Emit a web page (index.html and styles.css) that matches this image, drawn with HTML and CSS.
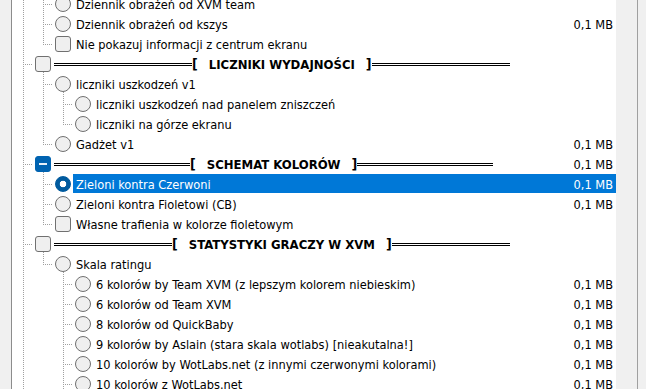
FILE: index.html
```html
<!DOCTYPE html>
<html lang="pl">
<head>
  <meta charset="UTF-8" />
  <title>Opcje XVM</title>
  <link rel="stylesheet" href="styles.css">
</head>
<body>
  <div class="gutter"></div>

  <div class="tree">
    <div class="list">
      <div class="row">
        <span class="g pipe"></span><span class="g tee"></span>
        <span class="ctl"><span class="radio"></span></span>
        <div class="item"><span class="label">Dziennik obrażeń od XVM team</span></div>
      </div>
      <div class="row">
        <span class="g pipe"></span><span class="g tee"></span>
        <span class="ctl"><span class="radio"></span></span>
        <div class="item"><span class="label">Dziennik obrażeń od kszys</span><span class="size">0,1 MB</span></div>
      </div>
      <div class="row">
        <span class="g pipe"></span><span class="g ell"></span>
        <span class="ctl"><span class="box"></span></span>
        <div class="item"><span class="label">Nie pokazuj informacji z centrum ekranu</span></div>
      </div>

      <!-- LICZNIKI -->
      <div class="row hdr hdr-liczniki">
        <span class="g tee"></span>
        <span class="ctl parent"><span class="box"></span></span>
        <div class="item">
          <span class="rule"></span><span class="br">[</span><span class="title">LICZNIKI WYDAJNOŚCI</span><span class="br">]</span><span class="rule"></span>
        </div>
      </div>
      <div class="row">
        <span class="g pipe"></span><span class="g tee"></span>
        <span class="ctl parent"><span class="radio"></span></span>
        <div class="item"><span class="label">liczniki uszkodzeń v1</span></div>
      </div>
      <div class="row">
        <span class="g pipe"></span><span class="g pipe"></span><span class="g tee"></span>
        <span class="ctl"><span class="radio"></span></span>
        <div class="item"><span class="label">liczniki uszkodzeń nad panelem zniszczeń</span></div>
      </div>
      <div class="row">
        <span class="g pipe"></span><span class="g pipe"></span><span class="g ell"></span>
        <span class="ctl"><span class="radio"></span></span>
        <div class="item"><span class="label">liczniki na górze ekranu</span></div>
      </div>
      <div class="row">
        <span class="g pipe"></span><span class="g ell"></span>
        <span class="ctl"><span class="radio"></span></span>
        <div class="item"><span class="label">Gadżet v1</span><span class="size">0,1 MB</span></div>
      </div>

      <!-- SCHEMAT KOLORÓW -->
      <div class="row hdr hdr-schemat">
        <span class="g tee"></span>
        <span class="ctl parent"><span class="box mixed"></span></span>
        <div class="item">
          <span class="rule"></span><span class="br">[</span><span class="title">SCHEMAT KOLORÓW</span><span class="br">]</span><span class="rule"></span>
          <span class="size">0,1 MB</span>
        </div>
      </div>
      <div class="row sel">
        <span class="g pipe"></span><span class="g tee"></span>
        <span class="ctl"><span class="radio on"></span></span>
        <div class="item"><span class="label">Zieloni kontra Czerwoni</span><span class="size">0,1 MB</span></div>
      </div>
      <div class="row">
        <span class="g pipe"></span><span class="g tee"></span>
        <span class="ctl"><span class="radio"></span></span>
        <div class="item"><span class="label">Zieloni kontra Fioletowi (CB)</span><span class="size">0,1 MB</span></div>
      </div>
      <div class="row">
        <span class="g pipe"></span><span class="g ell"></span>
        <span class="ctl"><span class="box"></span></span>
        <div class="item"><span class="label">Własne trafienia w kolorze fioletowym</span></div>
      </div>

      <!-- STATYSTYKI -->
      <div class="row hdr hdr-staty">
        <span class="g tee"></span>
        <span class="ctl parent"><span class="box"></span></span>
        <div class="item">
          <span class="rule"></span><span class="br">[</span><span class="title">STATYSTYKI GRACZY W XVM</span><span class="br">]</span><span class="rule"></span>
        </div>
      </div>
      <div class="row">
        <span class="g pipe"></span><span class="g ell"></span>
        <span class="ctl parent"><span class="radio"></span></span>
        <div class="item"><span class="label">Skala ratingu</span></div>
      </div>
      <div class="row">
        <span class="g pipe"></span><span class="g"></span><span class="g tee"></span>
        <span class="ctl"><span class="radio"></span></span>
        <div class="item"><span class="label">6 kolorów by Team XVM (z lepszym kolorem niebieskim)</span><span class="size">0,1 MB</span></div>
      </div>
      <div class="row">
        <span class="g pipe"></span><span class="g"></span><span class="g tee"></span>
        <span class="ctl"><span class="radio"></span></span>
        <div class="item"><span class="label">6 kolorów od Team XVM</span><span class="size">0,1 MB</span></div>
      </div>
      <div class="row">
        <span class="g pipe"></span><span class="g"></span><span class="g tee"></span>
        <span class="ctl"><span class="radio"></span></span>
        <div class="item"><span class="label">8 kolorów od QuickBaby</span><span class="size">0,1 MB</span></div>
      </div>
      <div class="row">
        <span class="g pipe"></span><span class="g"></span><span class="g tee"></span>
        <span class="ctl"><span class="radio"></span></span>
        <div class="item"><span class="label">9 kolorów by Aslain (stara skala wotlabs) [nieakutalna!]</span><span class="size">0,1 MB</span></div>
      </div>
      <div class="row">
        <span class="g pipe"></span><span class="g"></span><span class="g tee"></span>
        <span class="ctl"><span class="radio"></span></span>
        <div class="item"><span class="label">10 kolorów by WotLabs.net (z innymi czerwonymi kolorami)</span><span class="size">0,1 MB</span></div>
      </div>
      <div class="row">
        <span class="g pipe"></span><span class="g"></span><span class="g tee"></span>
        <span class="ctl"><span class="radio"></span></span>
        <div class="item"><span class="label">10 kolorów z WotLabs.net</span><span class="size">0,1 MB</span></div>
      </div>
    </div>
  </div>

  <div class="track"></div>
  <div class="divider"></div>
</body>
</html>
```

FILE: styles.css
```css
* {
  box-sizing: border-box;
}

html, body {
  margin: 0;
  height: 100%;
}

body {
  display: flex;
  background: #f0f0f0;
  font-family: "DejaVu Sans Condensed", "DejaVu Sans", sans-serif;
  font-size: 12.7px;
  color: #000;
  overflow: hidden;
}

.gutter {
  width: 11px;
  flex: none;
}

.tree {
  width: 605px;
  flex: none;
  background: #fff;
  border-left: 1px solid #8c8c8c;
  overflow: hidden;
}

.track {
  width: 21px;
  flex: none;
}

.divider {
  width: 1px;
  flex: none;
  background: #a0a0a0;
}

.list {
  margin-top: -6px;
}

.row {
  display: flex;
  height: 20px;
}

/* tree guide lines */
.g {
  width: 20px;
  height: 20px;
  flex: none;
}

.pipe {
  background: repeating-linear-gradient(#a0a0a0 0 1px, transparent 1px 2px) 11px 0 / 1px 20px no-repeat;
}

.tee {
  background:
    repeating-linear-gradient(#a0a0a0 0 1px, transparent 1px 2px) 11px 0 / 1px 20px no-repeat,
    repeating-linear-gradient(to right, #a0a0a0 0 1px, transparent 1px 2px) 13px 10px / 8px 1px no-repeat;
}

.ell {
  background:
    repeating-linear-gradient(#a0a0a0 0 1px, transparent 1px 2px) 11px 0 / 1px 11px no-repeat,
    repeating-linear-gradient(to right, #a0a0a0 0 1px, transparent 1px 2px) 13px 10px / 8px 1px no-repeat;
}

/* checkbox / radio cell */
.ctl {
  width: 20px;
  height: 20px;
  flex: none;
  display: flex;
  align-items: center;
  padding-left: 3px;
}

.ctl.parent {
  background: repeating-linear-gradient(#a0a0a0 0 1px, transparent 1px 2px) 11px 18px / 1px 2px no-repeat;
}

.box,
.radio {
  width: 16px;
  height: 16px;
  border: 1px solid #707070;
  background: #efefef;
}

.box {
  border-radius: 3px;
}

.radio {
  border-radius: 50%;
}

.box.mixed {
  border-color: #0063b1;
  background: linear-gradient(#e6f0f9, #e6f0f9) center / 8px 2px no-repeat, #0063b1;
}

.radio.on {
  border-color: #005a9e;
  background: radial-gradient(circle, #fff 0 3px, #005a9e 3.6px);
}

/* label + size */
.item {
  flex: 1;
  display: flex;
  align-items: center;
  height: 20px;
  margin-left: 1px;
  padding-left: 3px;
  white-space: nowrap;
  min-width: 0;
}

.label {
  flex: 1;
}

.size {
  margin-left: auto;
  padding-right: 3px;
}

.sel .item {
  background: linear-gradient(#0078d7, #0078d7) 0 0 / 100% 19px no-repeat;
  color: #fff;
}

/* section headers */
.hdr .item {
  padding-left: 1px;
  font-weight: bold;
}

.rule {
  flex: none;
  align-self: flex-start;
  margin-top: 9px;
  height: 3px;
  border-top: 3px double #000;
}

.br {
  font-size: 14px;
}

.title {
  font-size: 13px;
  padding: 0 11px;
}

.hdr .size {
  font-weight: normal;
}

.hdr-liczniki .rule {
  width: 138px;
}

.hdr-schemat .rule {
  width: 136px;
}

.hdr-staty .rule {
  width: 118px;
}
```
